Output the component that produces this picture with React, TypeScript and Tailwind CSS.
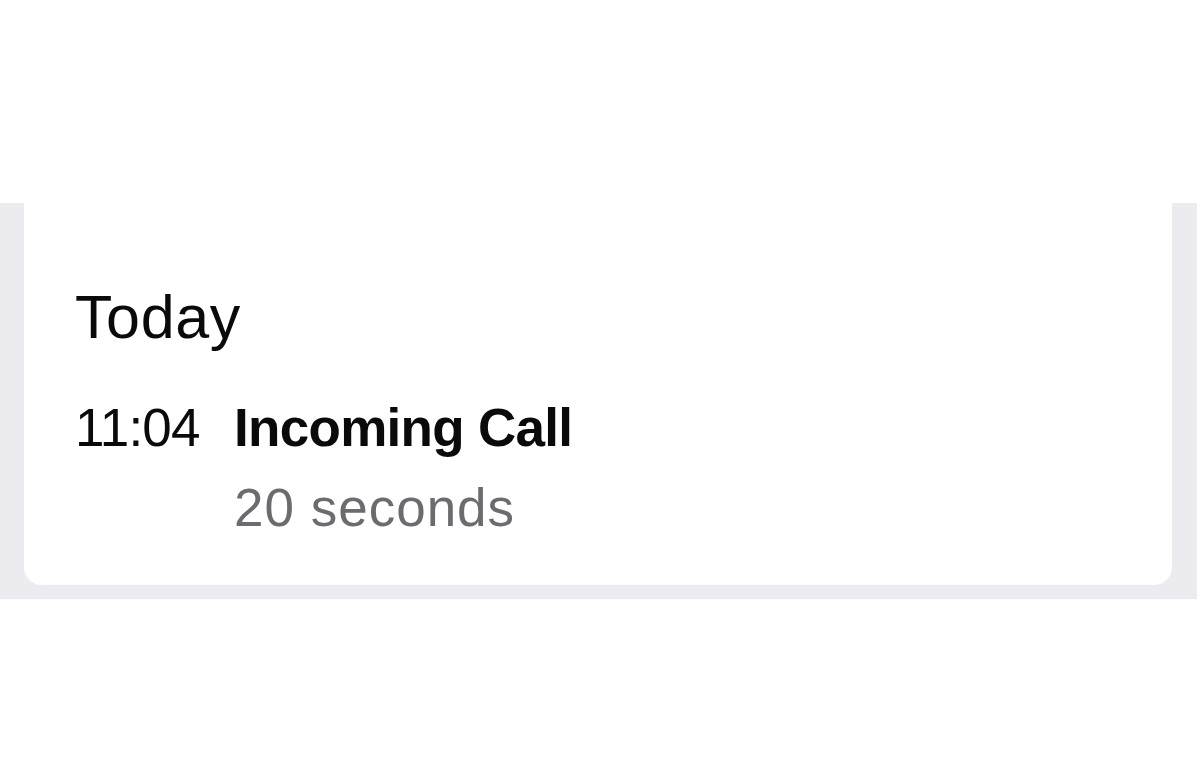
import React from "react";

export default function App() {
  return (
    <div className="w-[1200px] h-[778px] bg-white" style={{ fontFamily: '"Liberation Sans", Arial, sans-serif' }}>
      <div className="h-[203px]" />
      <div className="bg-[#ececf0] mr-[3px] pl-[24px] pr-[25px] pb-[14px]">
        <div className="bg-white rounded-b-[18px] h-[382px] pl-[51px] pt-[84px]">
          <div className="text-[61px] leading-[60px] tracking-[0.6px] text-[#0a0a0a]">Today</div>
          <div className="mt-[41px] flex items-baseline text-[53px] leading-[80px] text-[#0a0a0a]">
            <span className="w-[159px] tracking-[-0.8px]">11:04</span>
            <span className="font-bold tracking-[-0.7px]">Incoming Call</span>
          </div>
          <div className="pl-[159px] text-[53px] leading-[80px] tracking-[1px] text-[#6c6c70]">20 seconds</div>
        </div>
      </div>
    </div>
  );
}
